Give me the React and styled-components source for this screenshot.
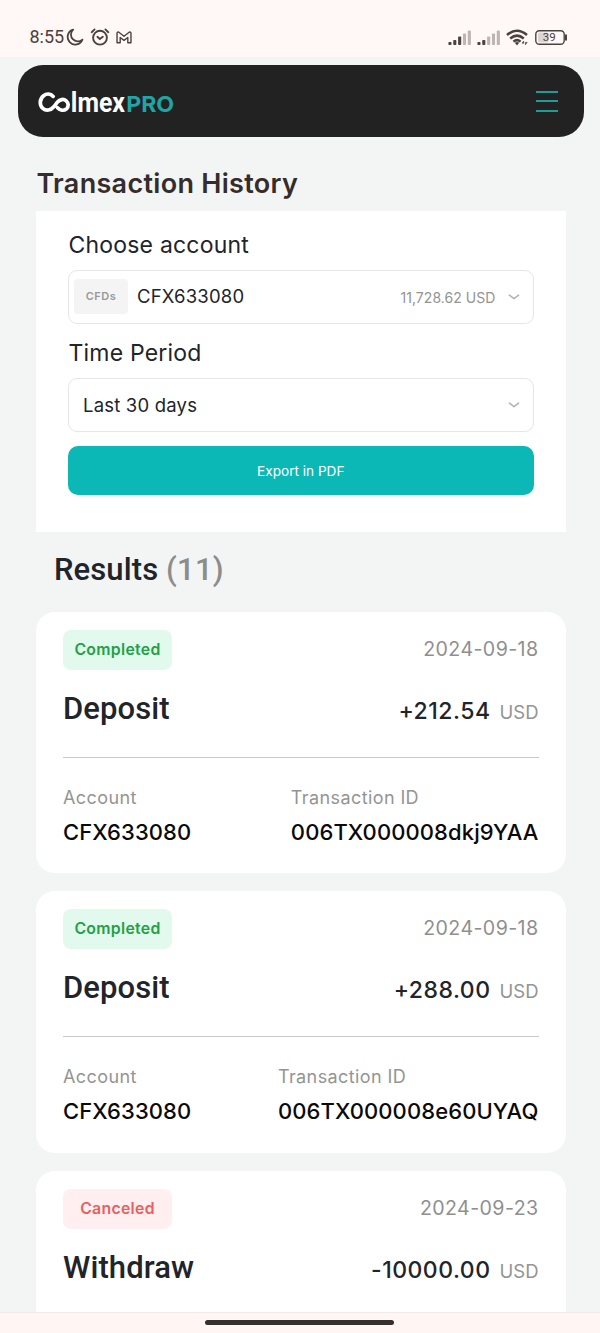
import React from 'react';
import styled, { createGlobalStyle } from 'styled-components';

const GlobalStyle = createGlobalStyle`
  * {
    box-sizing: border-box;
  }

  body {
    margin: 0;
    background-color: #f3f5f5;
    font-family: Inter, sans-serif;
    color: #212429;
  }
`;

const Screen = styled.div`
  width: 600px;
  height: 1333px;
  display: flex;
  flex-direction: column;
  overflow: hidden;
`;

const StatusBar = styled.div`
  height: 57px;
  flex-shrink: 0;
  padding: 17px 32px 0 29.5px;
  display: flex;
  align-items: center;
  justify-content: space-between;
  background-color: #fff8f6;
`;

const StatusGroup = styled.div`
  display: flex;
  align-items: center;
  gap: ${props => props.gap}px;
`;

const Clock = styled.span`
  font-family: Roboto, sans-serif;
  font-size: 18px;
  line-height: 20px;
  color: #4a4240;
  margin-right: -4px;
`;

const Content = styled.main`
  flex: 1;
  min-height: 0;
  overflow: hidden;
  padding: 8px 34.5px 0 36px;
`;

const Header = styled.header`
  height: 72px;
  margin: 0 -18px;
  padding: 0 24px 0 20px;
  display: flex;
  align-items: center;
  justify-content: space-between;
  background-color: #222222;
  border-radius: 25px;
`;

const MenuButton = styled.button`
  width: 24px;
  height: 21px;
  padding: 0;
  border: none;
  background: none;
  display: flex;
  flex-direction: column;
  justify-content: space-between;
  cursor: pointer;
`;

const MenuLine = styled.span`
  width: 22px;
  height: 2px;
  background-color: #1f9c99;
`;

const PageTitle = styled.h1`
  margin: 27px 0 7px 0.5px;
  font-size: 27px;
  font-weight: 600;
  line-height: 40px;
  letter-spacing: 0.3px;
  color: #352c2c;
`;

const FilterPanel = styled.section`
  height: 321px;
  padding: 14px 32px 0;
  background-color: #ffffff;
`;

const Label = styled.label`
  display: block;
  font-size: 23px;
  line-height: 40px;
  letter-spacing: 0.2px;
  margin: 0 0 5px 0.5px;
`;

const Select = styled.div`
  height: 54px;
  padding: 0 13px 0 ${props => props.padLeft}px;
  display: flex;
  align-items: center;
  border: 1px solid #e6e6e6;
  border-radius: 9px;
  margin-bottom: ${props => props.gap}px;
`;

const AccountType = styled.span`
  width: 54px;
  height: 35px;
  margin-bottom: 1px;
  border-radius: 4px;
  background-color: #f4f4f4;
  color: #999999;
  font-size: 11px;
  font-weight: 600;
  line-height: 35px;
  letter-spacing: 0.5px;
  text-align: center;
`;

const SelectValue = styled.span`
  flex: 1;
  margin-left: ${props => props.indent || 0}px;
  padding-bottom: ${props => props.lift || 0}px;
  font-size: 18.5px;
  letter-spacing: ${props => props.spacing}px;
`;

const Balance = styled.span`
  font-size: 14px;
  letter-spacing: 0.05px;
  color: #949494;
  margin-right: 12px;
`;

const ExportButton = styled.button`
  width: 100%;
  height: 49px;
  border: none;
  border-radius: 10px;
  background-color: #0cb8b6;
  color: #ffffff;
  font-family: inherit;
  font-size: 13.6px;
  cursor: pointer;
`;

const ResultsTitle = styled.h2`
  margin: 18px 0 22px 18px;
  font-family: Roboto, sans-serif;
  font-size: 31px;
  font-weight: 500;
  line-height: 40px;
  letter-spacing: 0.1px;
`;

const ResultsCount = styled.span`
  color: #8c8c8c;
  letter-spacing: 0.3px;
`;

const Card = styled.article`
  height: 261.4px;
  margin-bottom: 18px;
  padding: 18px 27px 0;
  border-radius: 19px;
  background-color: #ffffff;
`;

const CardRow = styled.div`
  display: flex;
  justify-content: space-between;
`;

const Badge = styled.span`
  width: 109px;
  height: 40px;
  border-radius: 8px;
  font-size: 15.8px;
  font-weight: 600;
  line-height: 40px;
  letter-spacing: 0.3px;
  text-align: center;
  background-color: ${props => (props.canceled ? '#ffeff0' : '#e2faed')};
  color: ${props => (props.canceled ? '#e85f63' : '#22a046')};
`;

const DateText = styled.span`
  font-size: 19.6px;
  line-height: 38px;
  letter-spacing: 0.4px;
  color: #8f8f8f;
`;

const Summary = styled(CardRow)`
  height: 88px;
  border-bottom: 1px solid #c8c8c8;
`;

const Kind = styled.h3`
  margin: 19px 0 0;
  font-family: Roboto, sans-serif;
  font-size: 31px;
  font-weight: 500;
  line-height: 40px;
  letter-spacing: 0.1px;
`;

const Amount = styled.span`
  margin-top: 21px;
  font-size: 23px;
  font-weight: 500;
  line-height: 40px;
  letter-spacing: 0.5px;
`;

const Currency = styled.span`
  margin-left: 9px;
  font-size: 18.5px;
  font-weight: 400;
  letter-spacing: 0;
  color: #949494;
`;

const Details = styled(CardRow)`
  padding-top: 24px;
`;

const FieldName = styled.div`
  font-size: 18px;
  line-height: 32px;
  letter-spacing: 0.4px;
  color: #949494;
`;

const FieldValue = styled.div`
  font-size: 22px;
  font-weight: 500;
  line-height: 36px;
  letter-spacing: 0.1px;
  color: #0a0a0a;
`;

const NavBar = styled.footer`
  height: 21px;
  flex-shrink: 0;
  display: flex;
  justify-content: center;
  padding: 7px 1px 0 0;
  border-top: 1.5px solid #f3e9e8;
  background-color: #fff6f4;
`;

const HomeIndicator = styled.div`
  width: 189px;
  height: 5px;
  border-radius: 3px;
  background-color: #33302f;
`;

const ink = '#4a4240';

const MoonIcon = () => (
  <svg width="18" height="18" viewBox="0 0 18 18" fill="none" stroke={ink} strokeWidth="1.8" strokeLinejoin="round">
    <path d="M7.2 1.6A7.6 7.6 0 1 0 16.4 11.6A6.6 6.6 0 0 1 7.2 1.6Z" />
  </svg>
);

const AlarmIcon = () => (
  <svg width="20" height="18" viewBox="0 0 20 18" fill="none" stroke={ink} strokeWidth="1.9" strokeLinecap="round">
    <circle cx="10" cy="9.7" r="6.9" />
    <path d="M1.7 4.2L4.6 1.4M18.3 4.2L15.4 1.4M7.4 8.8L9.8 11L12.8 8.8" />
  </svg>
);

const MailIcon = () => (
  <svg width="16" height="13" viewBox="0 0 17 14" fill="none" stroke={ink} strokeWidth="1.5" strokeLinejoin="round">
    <path d="M1 12.6V2.4Q1 .8 2.6 1L8.5 5.6L14.4 1Q16 .8 16 2.4V12.6H12.6V7L8.5 10.1L4.4 7V12.6Z" />
  </svg>
);

const SignalIcon = ({ level }) => (
  <svg width="23" height="15" viewBox="0 0 23 15">
    {[3, 5, 8.5, 11.5, 14.5].map((h, i) => (
      <rect key={i} x={0.4 + i * 4.85} y={15 - h} width="3.1" height={h} rx="0.8" fill={i < level ? ink : '#bdb5b2'} />
    ))}
  </svg>
);

const WifiIcon = () => (
  <svg width="23" height="17" viewBox="0 0 23 17" fill="none" stroke={ink} strokeWidth="2.5">
    <path d="M1 6Q11 -2.6 21 6M4.2 9.5Q11 3.8 17.8 9.5M7.4 12.6Q11 9.7 14.6 12.6" />
    <path d="M8.8 13.8Q11 12.2 13.2 13.8L11 16.4Z" fill={ink} stroke="none" />
    <path d="M17.7 12L16 14.2H17.7ZM19.4 15.8L21.2 13.4H19.4Z" fill={ink} stroke={ink} strokeWidth="0.6" />
  </svg>
);

const BatteryIcon = () => (
  <svg width="33" height="15" viewBox="0 0 33 15">
    <rect x="3" y="2.5" width="10.5" height="10" rx="1.5" fill="#ddd5d3" />
    <rect x="0.8" y="0.8" width="28.4" height="13.4" rx="3.5" fill="none" stroke={ink} strokeWidth="1.4" />
    <path d="M31 5.3V9.7" stroke={ink} strokeWidth="2" strokeLinecap="round" />
    <text x="14.3" y="11.4" textAnchor="middle" fontFamily="Roboto, sans-serif" fontSize="11.5" fill={ink}>39</text>
  </svg>
);

const Logo = () => (
  <svg width="140" height="44" viewBox="0 -7 140 44">
    <path
      d="M15.2 10.4C12.6 7.6 8.6 7.3 5.6 9.7C1.4 13 1.2 19.3 4.8 22.4C8.2 25.3 12.8 24.4 15.8 20.8L19.4 16.2C21.8 13.2 25.6 12.6 28.2 14.8C30.8 17.1 30.8 20.7 28.5 22.8C25.8 25.1 22 24.5 19.5 21.8"
      fill="none"
      stroke="#ffffff"
      strokeWidth="3.7"
      strokeLinecap="round"
    />
    <g transform="translate(32.8 26) scale(0.86 1)">
      <text textLength="63" lengthAdjust="spacingAndGlyphs" fontFamily="Roboto, sans-serif" fontSize="28" fontWeight="700" fill="#ffffff">lmex</text>
    </g>
    <text x="88.2" y="26" textLength="48" lengthAdjust="spacingAndGlyphs" fontFamily="Inter, sans-serif" fontSize="22" fontWeight="700" fill="#20a5a6">PRO</text>
  </svg>
);

const ChevronIcon = () => (
  <svg width="12" height="8" viewBox="0 0 12 8" fill="none" stroke="#b4b4b4" strokeWidth="1.6" strokeLinecap="round" strokeLinejoin="round">
    <path d="M1.4 2.2L6 5.6L10.6 2.2" />
  </svg>
);

const transactions = [
  { kind: 'Deposit', status: 'Completed', date: '2024-09-18', amount: '+212.54', account: 'CFX633080', id: '006TX000008dkj9YAA' },
  { kind: 'Deposit', status: 'Completed', date: '2024-09-18', amount: '+288.00', account: 'CFX633080', id: '006TX000008e60UYAQ' },
  { kind: 'Withdraw', status: 'Canceled', date: '2024-09-23', amount: '-10000.00' },
];

const TransactionCard = ({ item }) => (
  <Card>
    <CardRow>
      <Badge canceled={item.status === 'Canceled' ? 1 : 0}>{item.status}</Badge>
      <DateText>{item.date}</DateText>
    </CardRow>
    <Summary>
      <Kind>{item.kind}</Kind>
      <Amount>
        {item.amount}
        <Currency>USD</Currency>
      </Amount>
    </Summary>
    {item.id && (
      <Details>
        <div>
          <FieldName>Account</FieldName>
          <FieldValue>{item.account}</FieldValue>
        </div>
        <div>
          <FieldName>Transaction ID</FieldName>
          <FieldValue>{item.id}</FieldValue>
        </div>
      </Details>
    )}
  </Card>
);

const App = () => {
  return (
    <>
      <GlobalStyle />
      <Screen>
        <StatusBar>
          <StatusGroup gap={6}>
            <Clock>8:55</Clock>
            <MoonIcon />
            <AlarmIcon />
            <MailIcon />
          </StatusGroup>
          <StatusGroup gap={6}>
            <SignalIcon level={3} />
            <SignalIcon level={2} />
            <WifiIcon />
            <BatteryIcon />
          </StatusGroup>
        </StatusBar>

        <Content>
          <Header>
            <Logo />
            <MenuButton aria-label="Menu">
              <MenuLine />
              <MenuLine />
              <MenuLine />
            </MenuButton>
          </Header>

          <PageTitle>Transaction History</PageTitle>

          <FilterPanel>
            <Label>Choose account</Label>
            <Select padLeft={5} gap={9}>
              <AccountType>CFDs</AccountType>
              <SelectValue indent={9} lift={1.5} spacing={0.2}>CFX633080</SelectValue>
              <Balance>11,728.62 USD</Balance>
              <ChevronIcon />
            </Select>
            <Label>Time Period</Label>
            <Select padLeft={14} gap={14}>
              <SelectValue spacing={0.2}>Last 30 days</SelectValue>
              <ChevronIcon />
            </Select>
            <ExportButton>Export in PDF</ExportButton>
          </FilterPanel>

          <ResultsTitle>
            Results <ResultsCount>(11)</ResultsCount>
          </ResultsTitle>

          {transactions.map((item, index) => (
            <TransactionCard key={index} item={item} />
          ))}
        </Content>

        <NavBar>
          <HomeIndicator />
        </NavBar>
      </Screen>
    </>
  );
};

export default App;
